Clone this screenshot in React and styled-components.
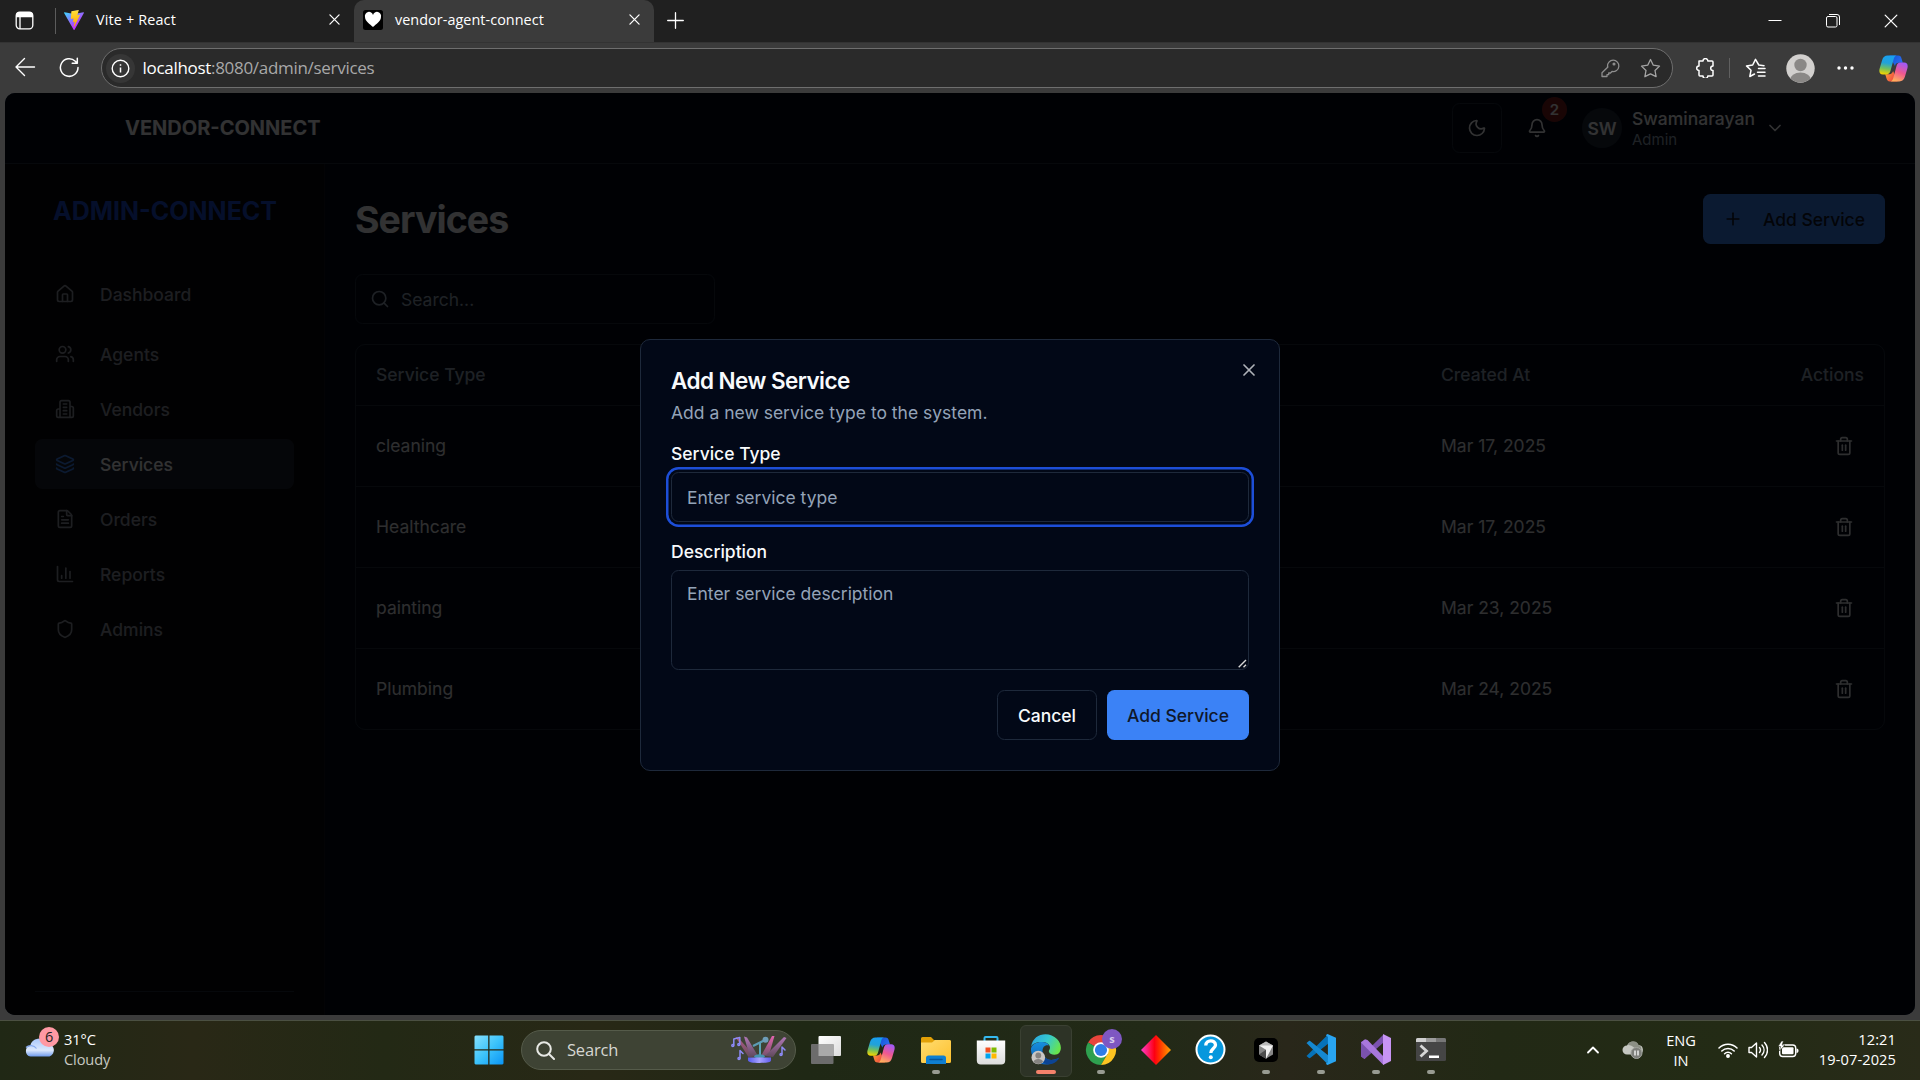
import React from "react";
import styled, { createGlobalStyle } from "styled-components";
import {
  House, Users, Layers, FileText, ChartColumn, Shield, Search, Moon, Bell,
  ChevronDown, ChevronUp, Plus, Trash2, X,
} from "lucide-react";

const Global = createGlobalStyle`
  * { box-sizing: border-box; }
  html, body { margin: 0; padding: 0; background: #3b3b3b; }
  body { width: 1920px; height: 1080px; overflow: hidden; font-family: Inter, "Liberation Sans", sans-serif; }
  button, input, textarea { font: inherit; margin: 0; }
  svg { display: block; flex: none; }
`;

const uiFont = `"Open Sans", "Noto Sans", sans-serif`;

const Screen = styled.div`
  width: 1920px;
  height: 1080px;
  display: flex;
  flex-direction: column;
  background: #3b3b3b;
`;

/* ---------- browser chrome ---------- */
const TabStrip = styled.div`
  height: 42px;
  display: flex;
  align-items: center;
  background: #202020;
  font-family: ${uiFont};
  color: #fff;
`;
const StripIcon = styled.div`
  width: ${(p) => p.$w}px;
  padding-bottom: 2px;
  display: flex;
  justify-content: center;
`;
const StripDivider = styled.div`
  width: 1px;
  height: 26px;
  background: #5c5c5c;
`;
const Tab = styled.div`
  width: ${(p) => p.$w}px;
  height: 42px;
  padding: 0 14px 3px ${(p) => p.$pl}px;
  display: flex;
  align-items: center;
  gap: 12px;
  font-size: 14.4px;
  letter-spacing: ${(p) => p.$ls || 0}px;
  border-radius: 10px 10px 0 0;
  background: ${(p) => (p.$active ? "#3b3b3b" : "transparent")};
`;
const TabTitle = styled.span`
  flex: 1;
  white-space: nowrap;
  padding-bottom: 1px;
`;
const Spacer = styled.div`
  flex: 1;
`;
const WindowButtons = styled.div`
  display: flex;
  gap: 44px;
  padding-right: 22px;
`;
const Toolbar = styled.div`
  height: 51px;
  display: flex;
  align-items: center;
  font-family: ${uiFont};
  padding: 0 12px;
  border-top: 1px solid #333;
`;
const NavButtons = styled.div`
  width: 88.5px;
  display: flex;
  gap: 23px;
  padding: 0 0 1px 2px;
`;
const AddressBar = styled.div`
  width: 1572px;
  height: 40px;
  border: 1px solid #6e6e6e;
  border-radius: 20px;
  background: #2a2a2a;
  display: flex;
  align-items: center;
  padding: 0 11px 0 4px;
`;
const InfoCircle = styled.div`
  width: 29px;
  height: 29px;
  border-radius: 50%;
  background: #363636;
  display: grid;
  place-items: center;
`;
const Url = styled.span`
  flex: 1;
  margin-left: 8px;
  padding-bottom: 2px;
  font-size: 17px;
  letter-spacing: -0.3px;
  color: #a8a8a8;
  b { font-weight: 400; color: #fff; }
`;
const AddressIcons = styled.div`
  display: flex;
  gap: 20px;
`;
const ToolIcons = styled.div`
  flex: 1;
  display: flex;
  align-items: center;
  padding-left: 22px;
`;
const ToolSlot = styled.div`
  margin-right: ${(p) => p.$mr || 0}px;
`;
const ToolDivider = styled.div`
  width: 1px;
  height: 20px;
  margin-right: 15px;
  background: #606060;
`;

/* ---------- app page ---------- */
const Viewport = styled.div`
  position: relative;
  height: 922px;
  margin: 0 5px;
  border-radius: 10px;
  overflow: hidden;
  background: #020817;
  color: #f8fafc;
  display: flex;
  flex-direction: column;
  font-size: 17.5px;
`;
const Header = styled.header`
  height: 71px;
  border-bottom: 1px solid #1e293b;
  display: flex;
  align-items: center;
  padding: 0 130px 0 120px;
`;
const Brand = styled.div`
  flex: 1;
  font-size: 20px;
  font-weight: 700;
`;
const ThemeButton = styled.div`
  width: 50px;
  height: 50px;
  border: 1px solid #1e293b;
  border-radius: 7.5px;
  display: grid;
  place-items: center;
`;
const BellWrap = styled.div`
  position: relative;
  margin-left: 25px;
`;
const Badge = styled.span`
  position: absolute;
  left: 15px;
  top: -21px;
  width: 25px;
  height: 25px;
  border-radius: 50%;
  background: #7f1d1d;
  display: grid;
  place-items: center;
  font-size: 15px;
  font-weight: 600;
`;
const Avatar = styled.div`
  width: 40px;
  height: 40px;
  margin: 0 10px 0 35px;
  border-radius: 50%;
  background: #1e293b;
  display: grid;
  place-items: center;
  font-weight: 600;
`;
const UserBlock = styled.div`
  width: 123px;
  margin-right: 10px;
  font-weight: 500;
  line-height: 25px;
  padding-bottom: 1px;
  small { display: block; font-size: 15px; line-height: 18px; font-weight: 400; color: #94a3b8; }
`;
const Body = styled.div`
  flex: 1;
  display: flex;
`;
const Sidebar = styled.aside`
  width: 320px;
  border-right: 1px solid #10131a;
  background: #07080b;
  padding: 0 30px 23px;
  display: flex;
  flex-direction: column;
`;
const SideTitle = styled.div`
  margin: 32px 0 43px 18px;
  font-size: 25px;
  line-height: 30px;
  font-weight: 700;
  color: #1d4ed8;
`;
const Nav = styled.nav`
  flex: 1;
  display: flex;
  flex-direction: column;
  gap: 5px;
`;
const NavItem = styled.div`
  height: 50px;
  padding: 0 20px;
  margin-bottom: ${(p) => p.$mb || 0}px;
  border-radius: 7.5px;
  display: flex;
  align-items: center;
  gap: 25px;
  font-weight: 500;
  color: ${(p) => (p.$active ? "#f8fafc" : "#9296a3")};
  background: ${(p) => (p.$active ? "#1c212f" : "transparent")};
  svg { color: ${(p) => (p.$active ? "#3b82f6" : "#9296a3")}; }
`;
const SideRule = styled.div`
  height: 1px;
  background: #1e293b;
`;
const Main = styled.main`
  flex: 1;
  padding: 30px 30px 0;
`;
const TitleRow = styled.div`
  display: flex;
  align-items: center;
  justify-content: space-between;
  height: 50px;
  margin-bottom: 30px;
`;
const PageTitle = styled.h1`
  margin: 0;
  font-size: 37.5px;
  font-weight: 700;
  letter-spacing: -0.94px;
`;
const PrimaryButton = styled.div`
  height: 50px;
  padding: 0 20px;
  display: flex;
  align-items: center;
  gap: 20px;
  border-radius: 7.5px;
  background: #3b82f6;
  color: #0f172a;
  font-weight: 500;
`;
const SearchBox = styled.div`
  width: 360px;
  height: 50px;
  padding: 0 14px;
  margin-bottom: 20px;
  border: 1px solid #1e293b;
  border-radius: 7.5px;
  display: flex;
  align-items: center;
  gap: 11px;
  color: #94a3b8;
`;
const Table = styled.div`
  border: 1px solid #1e293b;
  border-radius: 10px;
`;
const Row = styled.div`
  display: grid;
  grid-template-columns: 1065px 1fr auto;
  align-items: center;
  height: ${(p) => (p.$head ? 60 : 81)}px;
  padding: 0 ${(p) => (p.$head ? 20 : 30)}px 1px 20px;
  border-top: ${(p) => (p.$head ? "none" : "1px solid #1e293b")};
  color: ${(p) => (p.$head ? "#94a3b8" : "#e4e7ec")};
  font-weight: ${(p) => (p.$head ? 500 : 400)};
`;

/* ---------- dialog ---------- */
const Overlay = styled.div`
  position: absolute;
  inset: 0;
  background: rgba(0, 0, 0, 0.8);
  display: flex;
  justify-content: center;
  align-items: flex-start;
  padding-top: 246px;
`;
const Dialog = styled.div`
  position: relative;
  width: 640px;
  height: 432px;
  padding: 29px 30px;
  border: 1px solid #1e293b;
  border-radius: 10px;
  background: #020817;
  display: flex;
  flex-direction: column;
`;
const CloseIcon = styled.div`
  position: absolute;
  right: 20px;
  top: 20px;
  opacity: 0.7;
`;
const DialogTitle = styled.h2`
  margin: 0;
  font-size: 22.5px;
  line-height: 23px;
  font-weight: 600;
  letter-spacing: -0.56px;
`;
const DialogText = styled.p`
  margin: 8px 0 20px;
  line-height: 25px;
  color: #94a3b8;
`;
const Label = styled.label`
  line-height: 18px;
  font-weight: 500;
  margin: ${(p) => p.$mt || 0}px 0 9px;
`;
const field = `
  width: 578px;
  border: 1px solid #1e293b;
  border-radius: 7.5px;
  background: #020817;
  color: #f8fafc;
  &::placeholder { color: #94a3b8; opacity: 1; }
`;
const TextField = styled.input`
  ${field}
  height: 50px;
  padding: 0 15px;
  outline: none;
  box-shadow: 0 0 0 2.5px #020817, 0 0 0 5px #1d4ed8;
`;
const AreaWrap = styled.div`
  position: relative;
  height: 100px;
`;
const TextArea = styled.textarea`
  ${field}
  display: block;
  height: 100px;
  padding: 10px 15px;
  line-height: 25px;
  outline: none;
  resize: none;
`;
const Grip = styled.svg`
  position: absolute;
  right: 2px;
  bottom: 2px;
`;
const DialogFooter = styled.div`
  display: flex;
  justify-content: flex-end;
  gap: 10px;
  margin-top: 20px;
`;
const OutlineButton = styled.div`
  height: 50px;
  width: 100px;
  border: 1px solid #1e293b;
  border-radius: 7.5px;
  display: grid;
  place-items: center;
  font-weight: 500;
`;

/* ---------- taskbar ---------- */
const Taskbar = styled.div`
  margin-top: 5px;
  height: 60px;
  border-top: 1px solid #4b5042;
  background: linear-gradient(90deg, #202815 0%, #292816 10%, #232915 20%, #282816 31%, #1f2815 42%, #222a17 60%, #29271a 67%, #222915 78%, #232b15 90%, #292b19 100%);
  display: flex;
  font-family: ${uiFont};
  color: #fff;
  font-size: 14.6px;
  line-height: 20px;
`;
const Weather = styled.div`
  width: 461px;
  display: flex;
  gap: 9px;
  padding: 8px 0 0 25px;
  letter-spacing: -0.1px;
  span { display: block; color: #c7c9c2; }
`;
const CloudWrap = styled.div`
  position: relative;
  width: 30px;
  height: 40px;
  padding-top: 7px;
`;
const CloudBadge = styled.b`
  position: absolute;
  left: 14px;
  top: -2px;
  width: 20px;
  height: 20px;
  border-radius: 50%;
  background: #ff99a4;
  color: #222;
  font-weight: 400;
  font-size: 14.5px;
  line-height: 20px;
  text-align: center;
`;
const AppSlot = styled.div`
  position: relative;
  width: ${(p) => p.$w || 55}px;
  height: 59px;
  padding-bottom: 2px;
  display: grid;
  place-items: center;
  &::before {
    content: "";
    position: absolute;
    left: 2px;
    top: 4px;
    width: 50px;
    height: 50px;
    border-radius: 6px;
    border: 1px solid ${(p) => (p.$active ? "#3a4032" : "transparent")};
    background: ${(p) => (p.$active ? "#2d3326" : "transparent")};
  }
  &::after {
    content: "";
    position: absolute;
    left: calc(50% - ${(p) => (p.$active ? 10 : 4)}px);
    bottom: 6px;
    width: ${(p) => (p.$active ? 20 : 8)}px;
    height: 4px;
    border-radius: 2px;
    background: ${(p) => (p.$active ? "#f4826b" : p.$open ? "#989b92" : "transparent")};
  }
  svg { position: relative; }
`;
const TaskSearch = styled.div`
  width: 275px;
  height: 40px;
  margin: 9px 2px 0 5px;
  padding: 0 7px 0 14px;
  border-radius: 20px;
  border: 1px solid #555b4a;
  background: #3e4334;
  display: flex;
  align-items: center;
  gap: 12px;
  font-size: 16.5px;
  letter-spacing: -0.2px;
  color: #d6d7d2;
  span { flex: 1; }
`;
const Tray = styled.div`
  flex: 1;
  display: flex;
  align-items: center;
  justify-content: flex-end;
  padding: 0 24px 1px 0;
`;
const TrayGroup = styled.div`
  display: flex;
  align-items: center;
  gap: ${(p) => p.$gap || 0}px;
  margin-right: ${(p) => p.$mr || 0}px;
`;
const TrayText = styled.div`
  text-align: ${(p) => p.$align};
  margin-right: ${(p) => p.$mr || 0}px;
  padding-bottom: ${(p) => p.$pb || 0}px;
  letter-spacing: ${(p) => p.$ls || 0}px;
  span { display: block; }
`;

/* ---------- drawings ---------- */
const line = { fill: "none", strokeLinecap: "round", strokeLinejoin: "round" };

const Cross = ({ size = 11, w = 1.4 }) => (
  <svg width={size} height={size} viewBox="0 0 12 12" {...line} stroke="#fff" strokeWidth={w}>
    <path d="M1 1l10 10M11 1L1 11" />
  </svg>
);

const TabPanelIcon = () => (
  <svg width="19" height="19" viewBox="0 0 19 19">
    <rect x="1.2" y="1.2" width="16.6" height="16.6" rx="3.5" fill="none" stroke="#fff" strokeWidth="1.3" />
    <path d="M1 5V4a3 3 0 0 1 3-3h11a3 3 0 0 1 3 3v2.200H1z" fill="#fff" />
    <path d="M5 6v12" stroke="#fff" strokeWidth="1.300" />
  </svg>
);

const ViteIcon = () => (
  <svg width="20" height="20" viewBox="0 0 256 257">
    <defs>
      <linearGradient id="va" x1="0" x2="0.58" y1="0.08" y2="0.78"><stop stopColor="#41D1FF" /><stop offset="1" stopColor="#BD34FE" /></linearGradient>
      <linearGradient id="vb" x1="0.43" x2="0.5" y1="0.02" y2="0.89"><stop stopColor="#FFEA83" /><stop offset="0.08" stopColor="#FFDD35" /><stop offset="1" stopColor="#FFA800" /></linearGradient>
    </defs>
    <path fill="url(#va)" d="M255.153 37.938L134.897 252.976c-2.483 4.44-8.862 4.466-11.382.048L.875 37.958c-2.746-4.814 1.371-10.646 6.827-9.67l120.385 21.517a6.537 6.537 0 0 0 2.322-.004l117.867-21.483c5.438-.991 9.574 4.796 6.877 9.62Z" />
    <path fill="url(#vb)" d="M185.432.063L96.440 17.501a3.268 3.268 0 0 0-2.634 3.014l-5.474 92.456a3.268 3.268 0 0 0 3.997 3.378l24.777-5.718c2.318-.535 4.413 1.507 3.936 3.838l-7.361 36.047c-.495 2.426 1.782 4.500 4.151 3.780l15.304-4.649c2.372-.720 4.652 1.360 4.150 3.788l-11.698 56.621c-.732 3.542 3.979 5.473 5.943 2.437l1.313-2.028l72.516-144.720c1.215-2.423-.880-5.186-3.540-4.672l-25.505 4.922c-2.396.462-4.435-1.770-3.759-4.114l16.646-57.705c.677-2.350-1.370-4.583-3.769-4.113Z" />
  </svg>
);

const HeartIcon = () => (
  <svg width="20" height="20" viewBox="0 0 20 20">
    <rect width="20" height="20" rx="2.500" fill="#000" />
    <path d="M10 17C7 14 2 11.500 2 7a4.100 4.100 0 0 1 8-2 4.100 4.100 0 0 1 8 2c0 4.500-5 7-8 10z" fill="#fff" />
  </svg>
);

const BackIcon = () => (
  <svg width="22" height="20" viewBox="0 0 22 20" {...line} stroke="#fff" strokeWidth="1.400">
    <path d="M20.500 10H2M10.500 1.500L2 10l8.500 8.500" />
  </svg>
);
const ReloadIcon = () => (
  <svg width="21" height="21" viewBox="0 0 21 21" {...line} stroke="#fff" strokeWidth="1.500">
    <path d="M19 10.500a8.800 8.800 0 1 1-2.700-6.300L18 6M18.300 1.200V6.200H13.200" />
  </svg>
);
const InfoIcon = () => (
  <svg width="19" height="19" viewBox="0 0 19 19" fill="none" stroke="#fff" strokeWidth="1.400">
    <circle cx="9.500" cy="9.500" r="8.300" />
    <path d="M9.500 8.500v5M9.500 5.200v1.600" strokeWidth="1.500" />
  </svg>
);
const KeyIcon = () => (
  <svg width="20" height="20" viewBox="0 0 20 20" {...line} stroke="#8e8e8e" strokeWidth="1.300">
    <path d="M7.500 8.500a5.700 5.700 0 1 1 4.500 5l-1.500 1.500H8.700v1.700H7v1.800H2v-3.700l5.900-5.800z" />
    <circle cx="14" cy="6" r="0.900" fill="#8e8e8e" />
  </svg>
);
const starPath = "M10.500 1.500l2.800 5.700 6.200.9-4.500 4.400 1.100 6.200-5.600-2.900-5.600 2.900L6 12.500 1.500 8.100l6.200-.9z";
const StarIcon = () => (
  <svg width="21" height="20" viewBox="0 0 21 20" {...line} stroke="#a5a5a5" strokeWidth="1.300"><path d={starPath} /></svg>
);
const PuzzleIcon = () => (
  <svg width="20" height="20" viewBox="0 0 20 20" {...line} stroke="#fff" strokeWidth="1.500">
    <path d="M4 3h4a2.400 2.400 0 0 1 4.800 0H17a1 1 0 0 1 1 1v4a2.300 2.300 0 0 0 0 4.600V17a1 1 0 0 1-1 1h-4.200a2.400 2.400 0 0 1-4.800 0H5a1 1 0 0 1-1-1v-4.500a2.300 2.300 0 0 1 0-4.600z" />
  </svg>
);
const FavoritesIcon = () => (
  <svg width="21" height="20" viewBox="0 0 21 20" {...line} stroke="#fff" strokeWidth="1.500">
    <path d="M19 7.700l-5.200-.7L10.500 1.300 7.700 7l-6.200.9L6 12.300l-1.200 6.200 4.700-2.500M13.500 10.500H20M12.500 14.200H20M13.500 18H20" />
  </svg>
);
const ProfileIcon = () => (
  <svg width="29" height="29" viewBox="0 0 29 29">
    <defs><clipPath id="pf"><circle cx="14.500" cy="14.500" r="14" /></clipPath></defs>
    <circle cx="14.500" cy="14.500" r="14.200" fill="#d2d0ce" />
    <circle cx="14.500" cy="11" r="6.200" fill="#8a8886" />
    <ellipse cx="14.500" cy="26" rx="10.500" ry="7.500" fill="#8a8886" clipPath="url(#pf)" />
  </svg>
);
const DotsIcon = () => (
  <svg width="17" height="4" viewBox="0 0 17 4" fill="#fff"><circle cx="2" cy="2" r="1.700" /><circle cx="8.500" cy="2" r="1.700" /><circle cx="15" cy="2" r="1.700" /></svg>
);

const CopilotIcon = ({ id, size = 28 }) => (
  <svg width={size} height={size} viewBox="0 0 28 28">
    <defs>
      <linearGradient id={id + "a"} x1="0.500" x2="0.350" y1="0" y2="1"><stop stopColor="#189ff0" /><stop offset="0.400" stopColor="#22a2d8" /><stop offset="0.700" stopColor="#73c05c" /><stop offset="1" stopColor="#f3d400" /></linearGradient>
      <linearGradient id={id + "b"} x1="0.700" x2="0.300" y1="0" y2="1"><stop stopColor="#a259f5" /><stop offset="0.500" stopColor="#f0588f" /><stop offset="1" stopColor="#ffb35b" /></linearGradient>
      <linearGradient id={id + "c"} x1="0" x2="1" y1="0" y2="0.500"><stop stopColor="#0f4fd0" /><stop offset="1" stopColor="#2a6cf0" /></linearGradient>
      <linearGradient id={id + "d"} x1="0" x2="1" y1="0" y2="0.500"><stop stopColor="#ffa33a" /><stop offset="1" stopColor="#ec4040" /></linearGradient>
    </defs>
    <path d="M10 1.500h8.500c2 0 2.800 1.200 3.300 3L23 8.500h-4c-2 0-3 1-3.600 3z" fill={`url(#${id}c)`} />
    <path d="M18 26.500H10.500c-2 0-2.800-1.200-3.300-3L6 19.500h4c2 0 3-1 3.600-3z" fill={`url(#${id}d)`} />
    <path d="M8.500 1.500H17c-1.800.3-2.500 2-3 4l-2.800 10.500c-.6 2.300-1.600 3.700-4 3.700H3.700C1 19.700-.2 17.700.5 14.500L3 6c1-3 2.500-4.500 5.500-4.500z" fill={`url(#${id}a)`} />
    <path d="M19.500 26.500H11c1.800-.3 2.500-2 3-4L16.800 12c.6-2.300 1.600-3.700 4-3.700h3.500c2.700 0 3.900 2 3.200 5.200L25 22c-1 3-2.500 4.500-5.500 4.500z" fill={`url(#${id}b)`} />
  </svg>
);

const BuildingIcon = () => (
  <svg width="20" height="20" viewBox="0 0 24 24" {...line} stroke="currentColor" strokeWidth="2">
    <path d="M6 22V4a2 2 0 0 1 2-2h8a2 2 0 0 1 2 2v18ZM6 12H4a2 2 0 0 0-2 2v6a2 2 0 0 0 2 2h2M18 9h2a2 2 0 0 1 2 2v9a2 2 0 0 1-2 2h-2M10 6h4M10 10h4M10 14h4M10 18h4" />
  </svg>
);

const WeatherCloud = () => (
  <svg width="30" height="22" viewBox="0 0 30 22">
    <defs><linearGradient id="wc" x1="0" x2="0" y1="0" y2="1"><stop stopColor="#a9c8fb" /><stop offset="0.650" stopColor="#dbe8fd" /><stop offset="1" stopColor="#6f9bec" /></linearGradient></defs>
    <path d="M5.500 20.500a5.500 5.500 0 0 1-.3-10.800A9 9 0 0 1 22 7.500a6.700 6.700 0 0 1 2.500 13z" fill="url(#wc)" />
    <path d="M1 11.500c3-3 8-2.500 10.500 1" fill="none" stroke="#86aaf0" strokeWidth="1.200" />
  </svg>
);
const WindowsIcon = () => (
  <svg width="30" height="30" viewBox="0 0 30 30">
    <defs><linearGradient id="wi" x1="0" x2="1" y1="0" y2="1"><stop stopColor="#86e0fd" /><stop offset="0.500" stopColor="#3cc3fb" /><stop offset="1" stopColor="#0a94f5" /></linearGradient></defs>
    <path d="M1.500 0.500H14.200V14.200H0.500V1.500zM15.500 .5H28.500l1 1V14.200H15.500zM.5 15.500H14.200V29.500H1.500l-1-1zM15.500 15.500H29.500V28.500l-1 1H15.500z" fill="url(#wi)" />
  </svg>
);
const StageArt = () => (
  <svg width="58" height="30" viewBox="0 0 58 30">
    <defs>
      <linearGradient id="sa" x1="0" x2="0" y1="0" y2="1"><stop stopColor="#b277b8" /><stop offset="1" stopColor="#5f4a5c" /></linearGradient>
      <linearGradient id="sb" x1="0" x2="0" y1="0" y2="1"><stop stopColor="#e264ae" /><stop offset="1" stopColor="#75536c" /></linearGradient>
      <linearGradient id="sc" x1="0" x2="1" y1="0" y2="0"><stop stopColor="#575cf0" /><stop offset="0.500" stopColor="#a6a0ff" /><stop offset="1" stopColor="#625dee" /></linearGradient>
    </defs>
    <path d="M5.500 2l3 1 16 18-6 1z" fill="url(#sb)" opacity="0.700" />
    <path d="M14 1.500l3 1L28 21l-8 1z" fill="url(#sa)" />
    <path d="M42 1h2.500L39 20l-8 1z" fill="url(#sb)" />
    <path d="M54 2l2.500 1L43 22l-8-1z" fill="url(#sa)" />
    <path d="M30 7v14" stroke="#5eb0c8" strokeWidth="1.800" />
    <path d="M23 11l12-6" stroke="#5c9cb4" strokeWidth="2.200" />
    <circle cx="35.500" cy="4.800" r="3" fill="#6e9db8" />
    <ellipse cx="29.500" cy="21.300" rx="5.500" ry="2" fill="#4794b0" />
    <path d="M18 22.500h23v3c0 1.700-5 2.500-11.500 2.500S18 27.200 18 25.500z" fill="url(#sc)" />
    <g {...line} stroke="#8d8af5" strokeWidth="1.500">
      <path d="M3.800 10V4l6-1.500V9" /><path d="M10 23v-7.500l3 3" /><path d="M52 19v-7l3 3" />
      <circle cx="2.800" cy="10.500" r="1" /><circle cx="8.800" cy="9.500" r="1" /><circle cx="9" cy="23.500" r="1" /><circle cx="51" cy="19.500" r="1" />
    </g>
  </svg>
);
const TaskViewIcon = () => (
  <svg width="30" height="28" viewBox="0 0 30 28">
    <defs><linearGradient id="tv" x1="0" x2="1" y1="0" y2="1"><stop stopColor="#fff" /><stop offset="1" stopColor="#dcdcdc" /></linearGradient></defs>
    <rect x="7.500" y="0" width="22.500" height="20" rx="1" fill="url(#tv)" />
    <rect x="0" y="8" width="22.500" height="20" rx="1" fill="#6c6c6c" />
    <rect x="7.500" y="8" width="15" height="12" fill="#a9a9a9" />
  </svg>
);
const FolderIcon = () => (
  <svg width="30" height="28" viewBox="0 0 30 28">
    <defs><linearGradient id="fo" x1="0" x2="1" y1="0" y2="1"><stop stopColor="#ffdc70" /><stop offset="1" stopColor="#fdc02d" /></linearGradient></defs>
    <path d="M0 2.500A1.500 1.500 0 0 1 1.500 1H10l3 3H28a2 2 0 0 1 2 2v5H0z" fill="#e2a007" />
    <path d="M0 6.500h11l3-2.500h14.500A1.500 1.500 0 0 1 30 5.500v20A1.500 1.500 0 0 1 28.500 27h-27A1.500 1.500 0 0 1 0 25.500z" fill="url(#fo)" />
    <path d="M5 28v-6a2.500 2.500 0 0 1 2.500-2.500h15A2.500 2.500 0 0 1 25 22v6z" fill="#0f7fd1" />
    <path d="M9 23.500h12" stroke="#08569b" strokeWidth="1.500" strokeLinecap="round" />
  </svg>
);
const StoreIcon = () => (
  <svg width="30" height="30" viewBox="0 0 30 30">
    <defs><linearGradient id="st" x1="0" x2="0" y1="0" y2="1"><stop stopColor="#fff" /><stop offset="1" stopColor="#dcdcdc" /></linearGradient></defs>
    <path d="M8.500 7V3a1 1 0 0 1 1-1h11a1 1 0 0 1 1 1v4" fill="none" stroke="#35b9ef" strokeWidth="2" />
    <path d="M.8 5.500H29.200V25.500a4 4 0 0 1-4 4H4.800a4 4 0 0 1-4-4z" fill="url(#st)" />
    <path d="M9.500 12.500h5v5h-5z" fill="#f25022" /><path d="M15.500 12.500h5v5h-5z" fill="#7fba00" />
    <path d="M9.500 18.500h5v5h-5z" fill="#00a4ef" /><path d="M15.500 18.500h5v5h-5z" fill="#ffb900" />
  </svg>
);
const EdgeIcon = () => (
  <svg width="30" height="31" viewBox="0 0 30 31">
    <defs>
      <linearGradient id="ea" x1="0" x2="1" y1="0.200" y2="0.600"><stop stopColor="#2aa5e0" /><stop offset="0.500" stopColor="#35c8d0" /><stop offset="1" stopColor="#69e54a" /></linearGradient>
      <linearGradient id="eb" x1="0" x2="0" y1="0" y2="1"><stop stopColor="#168fdd" /><stop offset="1" stopColor="#0e5db4" /></linearGradient>
    </defs>
    <path d="M0 13C2-1 18-3 26 5c4 4 5 10 2.500 13.500C26 22 19 21 18 18c-.6-1.500 1-2 1-4.500C19 10 15 8 11 8 5 8 1 10 0 13z" fill="url(#ea)" />
    <path d="M0 14.500C1 10 6 7.800 11 8c3.500.1 6 1.500 7 3.500-4-1-6.500 1.500-6.500 5.500 0 8 8 11.500 15.500 7C24 29 19 30.500 15 30.500 6 30.500-.5 23 0 14.500z" fill="url(#eb)" />
    <path d="M11.500 17c0 8 8 11.500 15.500 7 1.300-.7 1.300 0 .8.800C24 30.500 17 31.500 13 29c-4-3-4.500-8-1.500-12z" fill="#0c4494" />
    <circle cx="7.300" cy="23.500" r="6.800" fill="#c9c7c5" />
    <circle cx="7.300" cy="21.500" r="2.900" fill="#858381" /><path d="M2.500 28a5 4 0 0 1 9.600 0 6.700 6.700 0 0 1-9.600 0z" fill="#858381" />
  </svg>
);
const ChromeIcon = () => (
  <svg width="42" height="42" viewBox="-6 1 42 42">
    <path d="M15 22L2 14.500A15 15 0 0 1 28 14.500z" fill="#e8453c" />
    <path d="M15 22L2 14.500A15 15 0 0 0 15 37l7-12z" fill="#2ea04f" />
    <path d="M15 22l13-7.500A15 15 0 0 1 15 37l6.500-11z" fill="#fdc421" />
    <circle cx="15" cy="22" r="7.800" fill="#fff" /><circle cx="15" cy="22" r="6.100" fill="#2f7de8" />
    <circle cx="26" cy="11" r="10" fill="#7e57c2" />
    <text x="26" y="15" textAnchor="middle" fontFamily="Open Sans" fontSize="11" fontWeight="700" fill="#d7cbee">s</text>
  </svg>
);
const DiamondIcon = () => (
  <svg width="30" height="30" viewBox="0 0 30 30">
    <defs><linearGradient id="di" x1="0" x2="1"><stop stopColor="#ff3ccf" /><stop offset="0.450" stopColor="#fd0012" /><stop offset="0.600" stopColor="#ff2a00" /><stop offset="1" stopColor="#ffa400" /></linearGradient></defs>
    <path d="M15 0l15 15-15 15L0 15z" fill="url(#di)" />
  </svg>
);
const HelpIcon = () => (
  <svg width="31" height="31" viewBox="0 0 31 31">
    <circle cx="15.500" cy="15.500" r="14" fill="#0797dd" stroke="#fff" strokeWidth="2" />
    <path d="M10.800 11.500c0-6 9.700-6 9.700-.5 0 3.500-4.700 3.800-4.700 8" fill="none" stroke="#fff" strokeWidth="3.300" />
    <circle cx="15.800" cy="23.300" r="2" fill="#fff" />
  </svg>
);
const CubeIcon = () => (
  <svg width="24" height="24" viewBox="0 0 24 24">
    <rect width="24" height="24" rx="5" fill="#000" />
    <path d="M12 3.500l7 4v9l-7 4.300-7-4.300v-9z" fill="#868686" />
    <path d="M5 7.500l7-4 7 4-7 1.500z" fill="#b9b9b9" />
    <path d="M5 7.500h14l-7 13.300v-9z" fill="#f1f1f1" />
    <path d="M5 16.500l7-4.700v9z" fill="#4d4d4d" />
  </svg>
);
const VSCodeIcon = () => (
  <svg width="30" height="31" viewBox="0 0 30 31">
    <path d="M1 21.500L21.500 1l1.500 8L4.500 23.800c-1 .6-1.500.4-2.200-.2L.8 22.300c-.4-.3-.3-.6.2-.8z" fill="#0672b9" />
    <path d="M1 9.500L21.500 30l1.500-8L4.500 7.200c-1-.6-1.500-.4-2.200.2L.8 8.700c-.4.300-.3.500.2.800z" fill="#1588d1" />
    <path d="M21.500 0L30 3.800V27.200L21.500 31c-.8-.3-1.200-.8-1.500-1.500l2-1.500V3L20 1.500c.3-.8.800-1.300 1.500-1.500z" fill="#29a5f2" />
    <path d="M21.900 8.500V3l4 1v22l-4 2z" fill="#29a5f2" />
  </svg>
);
const VSIcon = () => (
  <svg width="30" height="31" viewBox="0 0 30 31">
    <path d="M0 8l3.500-2 18 23.500V22L7 9.500V21l-3.500 4L0 22.500z" fill="#7a52ae" />
    <path d="M0 22.500L22 1v8L3.500 25z" fill="#7a52ae" />
    <path d="M0 8.500L4 5.300 6.500 6 22.500 22.500V31z" fill="#a877dd" />
    <path d="M22 0l8 4v23l-8 4z" fill="#c794f4" />
  </svg>
);
const TerminalIcon = () => (
  <svg width="30" height="23" viewBox="0 0 30 23">
    <rect width="30" height="23" rx="1.500" fill="#454545" />
    <path d="M0 1.500A1.500 1.500 0 0 1 1.500 0H10v4H0z" fill="#cfcfcf" /><path d="M10 0h10v4H10z" fill="#9b9b9b" /><path d="M20 0h8.500A1.500 1.500 0 0 1 30 1.500V4H20z" fill="#777" />
    <path d="M4.500 7.500l6 5.500-6 5.500" fill="none" stroke="#d6d6d6" strokeWidth="2.800" />
    <path d="M13 17.500h10v2.500H13z" fill="#fff" />
  </svg>
);
const OneDriveIcon = () => (
  <svg width="21" height="18" viewBox="0 0 21 18">
    <path d="M5 13.500a4.500 4.500 0 0 1 0-9A6.500 6.500 0 0 1 16.500 4 4.800 4.800 0 0 1 17 13.500z" fill="#c5c7c1" />
    <path d="M6 4A5.500 5.500 0 0 1 16.500 4c3 1 3.500 4 2.500 6C14 9 11 4 6 4z" fill="#8c9085" />
    <circle cx="14.500" cy="12" r="5.500" fill="#7d7f7a" stroke="#a1a39d" /><path d="M13 9.500v5M16 9.500v5" stroke="#fff" strokeWidth="1.300" />
  </svg>
);
const WifiIcon = () => (
  <svg width="20" height="16" viewBox="0 0 20 16" {...line} stroke="#fff" strokeWidth="1.500">
    <path d="M1 6a12.700 12.700 0 0 1 18 0M3.800 9a8.700 8.700 0 0 1 12.400 0M6.600 11.700a4.800 4.800 0 0 1 6.800 0" />
    <circle cx="10" cy="14" r="1.200" fill="#fff" />
  </svg>
);
const SpeakerIcon = () => (
  <svg width="20" height="18" viewBox="0 0 20 18" {...line} stroke="#fff" strokeWidth="1.400">
    <path d="M1 6.500h2.500L8.500 2v14L3.500 11.500H1zM11.500 6.500c1.200 1.500 1.200 3.500 0 5M14 4c2.700 3 2.700 7 0 10M16.500 1.500c4 4.500 4 10.500 0 15" />
  </svg>
);
const BatteryIcon = () => (
  <svg width="21" height="18" viewBox="0 0 21 18">
    <rect x="1.700" y="4" width="16" height="11.500" rx="3" fill="none" stroke="#fff" strokeWidth="1.400" />
    <rect x="4" y="6.300" width="11.500" height="7" rx="1" fill="#fff" />
    <path d="M18.500 7.500c1.500 0 2 1 2 2.200s-.5 2.200-2 2.200z" fill="#fff" />
    <path d="M3.500 0L0 5.500h2.500L1.500 10 7 4H4.200L5.500 0z" fill="#fff" stroke="#242a17" strokeWidth="0.600" />
  </svg>
);

/* ---------- data ---------- */
const navItems = [
  { label: "Dashboard", icon: <House size={20} />, gap: 5 },
  { label: "Agents", icon: <Users size={20} /> },
  { label: "Vendors", icon: <BuildingIcon /> },
  { label: "Services", icon: <Layers size={20} />, active: true },
  { label: "Orders", icon: <FileText size={20} /> },
  { label: "Reports", icon: <ChartColumn size={20} /> },
  { label: "Admins", icon: <Shield size={20} /> },
];
const services = [
  ["cleaning", "Mar 17, 2025"],
  ["Healthcare", "Mar 17, 2025"],
  ["painting", "Mar 23, 2025"],
  ["Plumbing", "Mar 24, 2025"],
];
const apps = [
  { icon: <TaskViewIcon /> },
  { icon: <CopilotIcon id="ct" /> },
  { icon: <FolderIcon />, open: true },
  { icon: <StoreIcon /> },
  { icon: <EdgeIcon />, active: true },
  { icon: <ChromeIcon />, open: true },
  { icon: <DiamondIcon /> },
  { icon: <HelpIcon /> },
  { icon: <CubeIcon />, open: true },
  { icon: <VSCodeIcon />, open: true },
  { icon: <VSIcon />, open: true },
  { icon: <TerminalIcon />, open: true },
];

function BrowserChrome() {
  return (
    <>
      <TabStrip>
        <StripIcon $w={49}><TabPanelIcon /></StripIcon>
        <StripIcon $w={6} />
        <StripDivider />
        <Tab $w={298} $pl={8} $ls={0.15}>
          <ViteIcon />
          <TabTitle>Vite + React</TabTitle>
          <Cross />
        </Tab>
        <Tab $w={300} $pl={9} $ls={0.05} $active>
          <HeartIcon />
          <TabTitle>vendor-agent-connect</TabTitle>
          <Cross />
        </Tab>
        <StripIcon $w={42}>
          <svg width="17" height="17" viewBox="0 0 17 17" {...line} stroke="#fff" strokeWidth="1.300"><path d="M8.500 .7v15.600M.7 8.500h15.600" /></svg>
        </StripIcon>
        <Spacer />
        <WindowButtons>
          <svg width="14" height="14" viewBox="0 0 14 14" stroke="#fff"><path d="M.5 6.500h13" /></svg>
          <svg width="14" height="14" viewBox="0 0 14 14" stroke="#fff" fill="none"><rect x=".5" y="2.500" width="10.500" height="10.500" rx="1.500" /><path d="M3 .5h8a2.500 2.500 0 0 1 2.500 2.500v8" /></svg>
          <Cross size={14} w={1.100} />
        </WindowButtons>
      </TabStrip>
      <Toolbar>
        <NavButtons><BackIcon /><ReloadIcon /></NavButtons>
        <AddressBar>
          <InfoCircle><InfoIcon /></InfoCircle>
          <Url><b>localhost</b>:8080/admin/services</Url>
          <AddressIcons><KeyIcon /><StarIcon /></AddressIcons>
        </AddressBar>
        <ToolIcons>
          <ToolSlot $mr={14}><PuzzleIcon /></ToolSlot>
          <ToolDivider />
          <ToolSlot $mr={20}><FavoritesIcon /></ToolSlot>
          <ToolSlot $mr={22}><ProfileIcon /></ToolSlot>
          <ToolSlot $mr={25}><DotsIcon /></ToolSlot>
          <CopilotIcon id="cb" size={29} />
        </ToolIcons>
      </Toolbar>
    </>
  );
}

function Page() {
  return (
    <Viewport>
      <Header>
        <Brand>VENDOR-CONNECT</Brand>
        <ThemeButton><Moon size={20} /></ThemeButton>
        <BellWrap><Bell size={20} /><Badge>2</Badge></BellWrap>
        <Avatar>SW</Avatar>
        <UserBlock>Swaminarayan<small>Admin</small></UserBlock>
        <ChevronDown size={20} />
      </Header>
      <Body>
        <Sidebar>
          <SideTitle>ADMIN-CONNECT</SideTitle>
          <Nav>
            {navItems.map((n) => (
              <NavItem key={n.label} $active={n.active} $mb={n.gap}>{n.icon}{n.label}</NavItem>
            ))}
          </Nav>
          <SideRule />
        </Sidebar>
        <Main>
          <TitleRow>
            <PageTitle>Services</PageTitle>
            <PrimaryButton><Plus size={20} />Add Service</PrimaryButton>
          </TitleRow>
          <SearchBox><Search size={20} />Search...</SearchBox>
          <Table>
            <Row $head><span>Service Type</span><span>Created At</span><span>Actions</span></Row>
            {services.map(([name, date]) => (
              <Row key={name}><span>{name}</span><span>{date}</span><Trash2 size={20} /></Row>
            ))}
          </Table>
        </Main>
      </Body>
      <Overlay>
        <Dialog>
          <DialogTitle>Add New Service</DialogTitle>
          <DialogText>Add a new service type to the system.</DialogText>
          <Label>Service Type</Label>
          <TextField placeholder="Enter service type" />
          <Label $mt={21}>Description</Label>
          <AreaWrap>
            <TextArea placeholder="Enter service description" />
            <Grip width="9" height="9" viewBox="0 0 9 9" stroke="#d8d8d8" strokeWidth="1.400">
              <path d="M.7 8.300L8 1M5.500 8.300L8 5.800" />
            </Grip>
          </AreaWrap>
          <DialogFooter>
            <OutlineButton>Cancel</OutlineButton>
            <PrimaryButton>Add Service</PrimaryButton>
          </DialogFooter>
          <CloseIcon><X size={20} /></CloseIcon>
        </Dialog>
      </Overlay>
    </Viewport>
  );
}

function SystemTaskbar() {
  return (
    <Taskbar>
      <Weather>
        <CloudWrap><WeatherCloud /><CloudBadge>6</CloudBadge></CloudWrap>
        <div>31°C<span>Cloudy</span></div>
      </Weather>
      <AppSlot><WindowsIcon /></AppSlot>
      <TaskSearch>
        <svg width="19" height="19" viewBox="0 0 19 19" {...line} stroke="#e8e9e5" strokeWidth="2"><circle cx="8" cy="8" r="6.800" /><path d="M13 13l5 5" /></svg>
        <span>Search</span>
        <StageArt />
      </TaskSearch>
      {apps.map((a, i) => (
        <AppSlot key={i} $active={a.active} $open={a.open}>{a.icon}</AppSlot>
      ))}
      <Tray>
        <TrayGroup $gap={19} $mr={23}><ChevronUp size={20} strokeWidth={2.200} /><OneDriveIcon /></TrayGroup>
        <TrayText $align="center" $mr={22}><span>ENG</span><span>IN</span></TrayText>
        <TrayGroup $gap={10} $mr={20}><WifiIcon /><SpeakerIcon /><BatteryIcon /></TrayGroup>
        <TrayText $align="right" $ls={0.100} $pb={2}><span>12:21</span><span>19-07-2025</span></TrayText>
      </Tray>
    </Taskbar>
  );
}

export default function App() {
  return (
    <Screen>
      <Global />
      <BrowserChrome />
      <Page />
      <SystemTaskbar />
    </Screen>
  );
}
